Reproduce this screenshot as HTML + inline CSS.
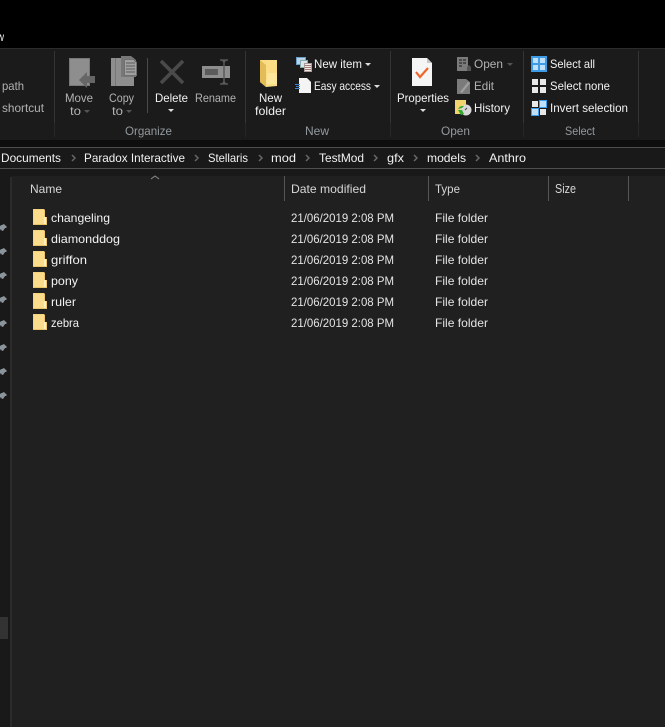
<!DOCTYPE html>
<html><head><meta charset="utf-8"><style>
html,body{margin:0;padding:0;background:#000;width:665px;height:727px;overflow:hidden}
svg{display:block}
text{font-family:"Liberation Sans",sans-serif;font-size:12px;fill:#e4e4e4}
.d{fill:#b2b2b2}.l{fill:#939a9f}.w{fill:#f2f2f2}
</style></head><body>
<svg xmlns="http://www.w3.org/2000/svg" width="665" height="727" viewBox="0 0 665 727">
<defs>
<g id="f"><path d="M0 0h11l1 1v7h2v8h-14z" fill="#f0c869"/><rect x="0.500" y="0.500" width="10.500" height="14.500" fill="#fbdc8c"/><path d="M11 8h2v7h-2z" fill="#fff0bd"/><path d="M1 15h12v1h-12z" fill="#e9c468"/></g>
<g id="p"><path d="M6 0l3 3-1 1-1 0-2 3-1.500-.5-.5-1.500-2.500 3-.5-.5 2-3-1.500-1.500 3-2 .5 0z" fill="#8b949a"/></g>
</defs>
<rect width="665" height="727" fill="#000"/>
<text x="-3" y="41" class="w" textLength="7" lengthAdjust="spacingAndGlyphs">w</text>
<!-- ribbon -->
<rect y="48" width="665" height="92" fill="#1b1b1b"/>
<rect y="48" width="665" height="1" fill="#2c2c2c"/>
<rect y="140" width="665" height="7" fill="#0e0e0e"/>
<rect y="147" width="665" height="1" fill="#4f4f4f"/>
<rect y="148" width="665" height="20" fill="#191919"/>
<rect y="168" width="665" height="1" fill="#4f4f4f"/>
<rect y="169" width="665" height="8" fill="#191919"/>
<!-- content -->
<rect x="0" y="177" width="10" height="550" fill="#191919"/>
<rect x="10" y="177" width="2" height="550" fill="#2b2b2b"/>
<rect x="12" y="176" width="653" height="551" fill="#202020"/>
<rect x="0" y="617" width="8" height="22" fill="#333"/>
<!-- ribbon separators -->
<g fill="#353535">
<rect x="54" y="51" width="1" height="72"/><rect x="245" y="51" width="1" height="72"/><rect x="390" y="51" width="1" height="72"/><rect x="523" y="51" width="1" height="72"/><rect x="638" y="51" width="1" height="72"/>
<rect x="147" y="58" width="1" height="55" fill="#4a4a4a"/>
</g>
<g fill="#272727"><rect x="54" y="123" width="1" height="14"/><rect x="245" y="123" width="1" height="14"/><rect x="390" y="123" width="1" height="14"/><rect x="523" y="123" width="1" height="14"/><rect x="638" y="123" width="1" height="14"/></g>
<!-- Clipboard remnant -->
<text x="2" y="90" class="d" textLength="22" lengthAdjust="spacingAndGlyphs">path</text>
<text x="2" y="112" class="d" textLength="42" lengthAdjust="spacingAndGlyphs">shortcut</text>
<!-- Move to -->
<rect x="69" y="58" width="21" height="28" fill="#8e8e8e"/><rect x="69.500" y="58.500" width="20" height="27" fill="none" stroke="#777" stroke-width="1"/>
<path d="M79 80l8-8v4h8v7h-8v5z" fill="#666"/>
<text x="65" y="102" class="d" textLength="28" lengthAdjust="spacingAndGlyphs">Move</text>
<text x="70" y="115" class="d" textLength="11" lengthAdjust="spacingAndGlyphs">to</text>
<path d="M84 110h6l-3 3z" fill="#555"/>
<!-- Copy to -->
<rect x="111" y="58" width="23" height="28" fill="#8e8e8e"/><rect x="115" y="58" width="1" height="28" fill="#777"/>
<path d="M121 56h10l5 4v17h-15z" fill="#777"/><path d="M124.500 59.500h9l3 3v13h-12z" fill="#a0a0a0" stroke="#6f6f6f"/>
<path d="M126 63h9M126 66h9M126 69h9M126 72h9" stroke="#5b5b5b"/>
<text x="109" y="102" class="d" textLength="25" lengthAdjust="spacingAndGlyphs">Copy</text>
<text x="112" y="115" class="d" textLength="11" lengthAdjust="spacingAndGlyphs">to</text>
<path d="M126 110h6l-3 3z" fill="#555"/>
<!-- Delete -->
<path d="M161 61L183 83M183 61L161 83" stroke="#4a4a4a" stroke-width="3.600"/>
<text x="155" y="102" class="w" textLength="33" lengthAdjust="spacingAndGlyphs">Delete</text>
<path d="M168 109h6l-3 3z" fill="#ddd"/>
<!-- Rename -->
<rect x="202" y="66" width="28" height="12" fill="#8e8e8e"/><rect x="205" y="69" width="13" height="6" fill="#5b5b5b"/>
<path d="M224 59v26M220 60h2l2 2 2-2h2M220 84h2l2-2 2 2h2" stroke="#5a5a5a" stroke-width="1.500" fill="none"/>
<text x="195" y="102" class="d" textLength="41" lengthAdjust="spacingAndGlyphs">Rename</text>
<!-- New folder -->
<path d="M260 60h17v26l-11 1-6-5z" fill="#fbdd85"/><path d="M260 60l6 5v22l-6-5z" fill="#e3bc58"/><path d="M266 84l2-11 9 0v11z" fill="#fde79b"/>
<text x="259" y="102" class="w" textLength="23" lengthAdjust="spacingAndGlyphs">New</text>
<text x="255" y="115" class="w" textLength="31" lengthAdjust="spacingAndGlyphs">folder</text>
<!-- New item -->
<rect x="296.500" y="57.500" width="9" height="7" fill="#b8d3ea" stroke="#6aa0c8"/><rect x="300.500" y="60.500" width="7" height="7" fill="#d8e4ee" stroke="#8aa"/>
<rect x="304.500" y="63.500" width="7" height="8" fill="#eee" stroke="#a99"/>
<path d="M305 65.500h6M305 67.500h6M305 69.500h6" stroke="#a77"/>
<text x="314" y="68" class="w" textLength="48" lengthAdjust="spacingAndGlyphs">New item</text>
<path d="M365 63h6l-3 3z" fill="#ddd"/>
<!-- Easy access -->
<path d="M299 78h8l4 4v11h-12z" fill="#f4f4f4"/><path d="M295 84.500h5M296 86.500h4M295 88.500h5" stroke="#3d86cf"/>
<text x="314" y="90" class="w" textLength="57" lengthAdjust="spacingAndGlyphs">Easy access</text>
<path d="M374 85h6l-3 3z" fill="#ddd"/>
<!-- Properties -->
<path d="M412 58h15l5 5v23h-20z" fill="#f5f5f5"/><path d="M427 58l5 5h-5z" fill="#c8c8c8"/>
<path d="M416 72l4 5 8-9" fill="none" stroke="#f0662a" stroke-width="2.200"/>
<text x="397" y="102" class="w" textLength="52" lengthAdjust="spacingAndGlyphs">Properties</text>
<path d="M420 109h6l-3 3z" fill="#ddd"/>
<!-- Open -->
<rect x="457" y="57" width="11" height="14" fill="#7b7b7b"/><path d="M459 60h3M459 63h3M459 66h3M463 60h3M463 63h3" stroke="#3a3a3a" stroke-width="1.500"/><path d="M467 71v-4l2-2 2 2v4z" fill="#555"/>
<text x="474" y="68" class="d" textLength="29" lengthAdjust="spacingAndGlyphs">Open</text>
<path d="M507 63h6l-3 3z" fill="#555"/>
<!-- Edit -->
<path d="M457 79h9l4 3v12h-13z" fill="#7b7b7b"/><path d="M460 92l8-10 2 1-8 10z" fill="#a0a0a0"/>
<text x="474" y="90" class="d" textLength="20" lengthAdjust="spacingAndGlyphs">Edit</text>
<!-- History -->
<rect x="455" y="100" width="11" height="14" fill="#f2d46f"/>
<circle cx="466" cy="110" r="5.500" fill="#d8d8d8"/><path d="M458 109a6 6 0 0 1 6-3l-2 2z" fill="#32a82e"/><path d="M458 110l3 5 3-1-2-4z" fill="#32a82e"/>
<path d="M465 110l2-2" stroke="#444"/>
<text x="474" y="112" class="w" textLength="36" lengthAdjust="spacingAndGlyphs">History</text>
<!-- Select -->
<g>
<rect x="531" y="56" width="16" height="16" fill="#3e9be6"/><g fill="#bfe0fa"><rect x="533" y="58" width="5" height="5"/><rect x="540" y="58" width="5" height="5"/><rect x="533" y="65" width="5" height="5"/><rect x="540" y="65" width="5" height="5"/></g>
<text x="550" y="68" class="w" textLength="45" lengthAdjust="spacingAndGlyphs">Select all</text>
<g fill="#e8e8e8"><rect x="532" y="79" width="6" height="6"/><rect x="540" y="79" width="6" height="6"/><rect x="532" y="87" width="6" height="6"/><rect x="540" y="87" width="6" height="6"/></g>
<text x="550" y="90" class="w" textLength="60" lengthAdjust="spacingAndGlyphs">Select none</text>
<rect x="531.500" y="108.500" width="7" height="7" fill="#bfe0fa" stroke="#3e9be6"/><rect x="539.500" y="100.500" width="7" height="7" fill="#bfe0fa" stroke="#3e9be6"/>
<rect x="532" y="101" width="6" height="6" fill="#e8e8e8"/><rect x="540" y="109" width="6" height="6" fill="#e8e8e8"/>
<text x="550" y="112" class="w" textLength="78" lengthAdjust="spacingAndGlyphs">Invert selection</text>
</g>
<!-- group labels -->
<text x="125" y="135" class="l" textLength="47" lengthAdjust="spacingAndGlyphs">Organize</text>
<text x="305" y="135" class="l" textLength="24" lengthAdjust="spacingAndGlyphs">New</text>
<text x="441" y="135" class="l" textLength="29" lengthAdjust="spacingAndGlyphs">Open</text>
<text x="565" y="135" class="l" textLength="30" lengthAdjust="spacingAndGlyphs">Select</text>
<!-- breadcrumb -->
<g class="b">
<text x="1" y="162" class="w" textLength="60" lengthAdjust="spacingAndGlyphs">Documents</text>
<text x="84" y="162" class="w" textLength="101" lengthAdjust="spacingAndGlyphs">Paradox Interactive</text>
<text x="208" y="162" class="w" textLength="40" lengthAdjust="spacingAndGlyphs">Stellaris</text>
<text x="271" y="162" class="w" textLength="25" lengthAdjust="spacingAndGlyphs">mod</text>
<text x="319" y="162" class="w" textLength="45" lengthAdjust="spacingAndGlyphs">TestMod</text>
<text x="387" y="162" class="w" textLength="17" lengthAdjust="spacingAndGlyphs">gfx</text>
<text x="427" y="162" class="w" textLength="39" lengthAdjust="spacingAndGlyphs">models</text>
<text x="489" y="162" class="w" textLength="37" lengthAdjust="spacingAndGlyphs">Anthro</text>
<path d="M72 155l3 3-3 3M195 155l3 3-3 3M259 155l3 3-3 3M306 155l3 3-3 3M374 155l3 3-3 3M414 155l3 3-3 3M476 155l3 3-3 3" fill="none" stroke="#666" stroke-width="1.500"/>
</g>
<!-- header -->
<path d="M151 179l4-3 4 3" fill="none" stroke="#8a8a8a"/>
<g fill="#555"><rect x="284" y="176" width="1" height="25"/><rect x="428" y="176" width="1" height="25"/><rect x="548" y="176" width="1" height="25"/><rect x="628" y="176" width="1" height="25"/></g>
<text x="30" y="193" style="fill:#d6d6d6" textLength="32" lengthAdjust="spacingAndGlyphs">Name</text>
<text x="291" y="193" style="fill:#d6d6d6" textLength="75" lengthAdjust="spacingAndGlyphs">Date modified</text>
<text x="435" y="193" style="fill:#d6d6d6" textLength="25" lengthAdjust="spacingAndGlyphs">Type</text>
<text x="555" y="193" style="fill:#d6d6d6;font-size:12.500px" textLength="21" lengthAdjust="spacingAndGlyphs">Size</text>
<!-- rows -->
<use href="#f" x="33" y="209"/><use href="#f" x="33" y="230"/><use href="#f" x="33" y="251"/><use href="#f" x="33" y="272"/><use href="#f" x="33" y="293"/><use href="#f" x="33" y="314"/>
<text x="51" y="222" class="w" textLength="59" lengthAdjust="spacingAndGlyphs">changeling</text>
<text x="51" y="243" class="w" textLength="69" lengthAdjust="spacingAndGlyphs">diamonddog</text>
<text x="51" y="264" class="w" textLength="36" lengthAdjust="spacingAndGlyphs">griffon</text>
<text x="51" y="285" class="w" textLength="27" lengthAdjust="spacingAndGlyphs">pony</text>
<text x="51" y="306" class="w" textLength="25" lengthAdjust="spacingAndGlyphs">ruler</text>
<text x="51" y="327" class="w" textLength="28" lengthAdjust="spacingAndGlyphs">zebra</text>
<g>
<text x="291" y="222" textLength="103" lengthAdjust="spacingAndGlyphs">21/06/2019 2:08 PM</text><text x="435" y="222" textLength="53" lengthAdjust="spacingAndGlyphs">File folder</text>
<text x="291" y="243" textLength="103" lengthAdjust="spacingAndGlyphs">21/06/2019 2:08 PM</text><text x="435" y="243" textLength="53" lengthAdjust="spacingAndGlyphs">File folder</text>
<text x="291" y="264" textLength="103" lengthAdjust="spacingAndGlyphs">21/06/2019 2:08 PM</text><text x="435" y="264" textLength="53" lengthAdjust="spacingAndGlyphs">File folder</text>
<text x="291" y="285" textLength="103" lengthAdjust="spacingAndGlyphs">21/06/2019 2:08 PM</text><text x="435" y="285" textLength="53" lengthAdjust="spacingAndGlyphs">File folder</text>
<text x="291" y="306" textLength="103" lengthAdjust="spacingAndGlyphs">21/06/2019 2:08 PM</text><text x="435" y="306" textLength="53" lengthAdjust="spacingAndGlyphs">File folder</text>
<text x="291" y="327" textLength="103" lengthAdjust="spacingAndGlyphs">21/06/2019 2:08 PM</text><text x="435" y="327" textLength="53" lengthAdjust="spacingAndGlyphs">File folder</text>
</g>
<!-- pins -->
<use href="#p" x="-2" y="224"/><use href="#p" x="-2" y="248"/><use href="#p" x="-2" y="272"/><use href="#p" x="-2" y="296"/><use href="#p" x="-2" y="320"/><use href="#p" x="-2" y="344"/><use href="#p" x="-2" y="368"/><use href="#p" x="-2" y="392"/>
</svg>
</body></html>
